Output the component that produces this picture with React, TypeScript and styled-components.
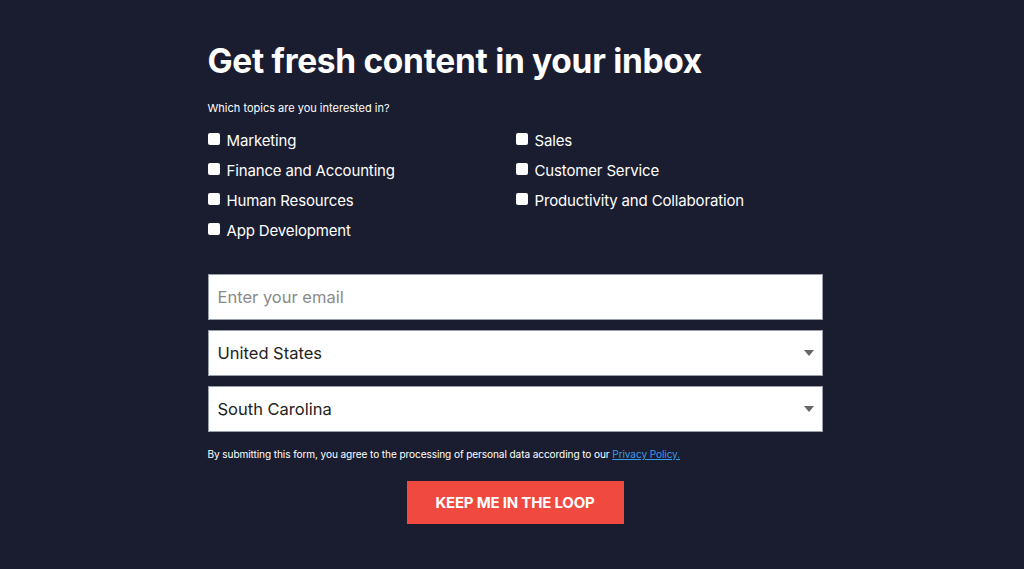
import React from "react";
import styled, {createGlobalStyle} from "styled-components";

const GlobalStyle = createGlobalStyle`
  html, body {
    margin: 0;
    padding: 0;
    background: #1a1d2f;
  }
  body {
    font-family: Inter, "Open Sans", "Liberation Sans", sans-serif;
  }
`;

const Page = styled.div`
  min-height: 569px;
  background: #1a1d2f;
  display: flex;
  justify-content: center;
`;

const Form = styled.form`
  width: 615px;
  margin-left: 6px;
  padding-top: 40px;
  display: flex;
  flex-direction: column;
`;

const Title = styled.h1`
  margin: 0;
  color: #fff;
  font-size: 33.5px;
  font-weight: 700;
  letter-spacing: -0.3px;
  line-height: 42px;
`;

const Question = styled.p`
  margin: 18px 0 9px;
  color: #fff;
  font-size: 11px;
  line-height: 16px;
`;

const Topics = styled.div`
  display: grid;
  grid-template-columns: 308px 1fr;
  grid-auto-flow: column;
  grid-template-rows: repeat(4, 30px);
`;

const Topic = styled.label`
  display: flex;
  align-items: center;
  gap: 7px;
  color: #fff;
  font-size: 15px;
  letter-spacing: -0.15px;
  cursor: pointer;
`;

const Box = styled.input`
  appearance: none;
  margin: 0;
  width: 12px;
  height: 12px;
  background: #fff;
  border-radius: 2px;
  flex: none;
  position: relative;
  top: -1px;
`;

const Fields = styled.div`
  margin-top: 29px;
  display: flex;
  flex-direction: column;
  gap: 10px;
`;

const Field = styled.div`
  height: 46px;
  background: #fff;
  border: 1px solid #9aa0ad;
  box-sizing: border-box;
  display: flex;
  align-items: center;
  justify-content: space-between;
  padding: 0 8px 0 9px;
`;

const FieldText = styled.span<{placeholder?: boolean}>`
  font-size: 16.5px;
  color: ${p => p.placeholder ? '#8a8a8a' : '#222'};
`;

const Caret = styled.span`
  width: 0;
  height: 0;
  border-left: 5px solid transparent;
  border-right: 5px solid transparent;
  border-top: 6px solid #666;
`;

const Notice = styled.p`
  margin: 15px 0 0;
  color: #fff;
  font-size: 10.1px;
  line-height: 14px;
  letter-spacing: -0.1px;
`;

const Link = styled.a`
  color: #3a9be8;
  text-decoration: underline;
`;

const Submit = styled.button`
  align-self: center;
  margin-top: 20px;
  width: 217px;
  height: 43px;
  border: none;
  background: #f04a40;
  color: #fff;
  font-family: inherit;
  font-size: 15px;
  font-weight: 700;
  letter-spacing: -0.2px;
  text-transform: uppercase;
`;

const topics = [
    'Marketing', 'Finance and Accounting', 'Human Resources', 'App Development',
    'Sales', 'Customer Service', 'Productivity and Collaboration',
];

export default function App() {
    return (
        <Page>
            <GlobalStyle/>
            <Form onSubmit={e => e.preventDefault()}>
                <Title>Get fresh content in your inbox</Title>
                <Question>Which topics are you interested in?</Question>
                <Topics>
                    {topics.map(t => (
                        <Topic key={t}><Box type="checkbox"/>{t}</Topic>
                    ))}
                </Topics>
                <Fields>
                    <Field><FieldText placeholder>Enter your email</FieldText></Field>
                    <Field><FieldText>United States</FieldText><Caret/></Field>
                    <Field><FieldText>South Carolina</FieldText><Caret/></Field>
                </Fields>
                <Notice>
                    By submitting this form, you agree to the processing of personal data according to our <Link href="#">Privacy Policy.</Link>
                </Notice>
                <Submit type="submit">Keep me in the loop</Submit>
            </Form>
        </Page>
    );
}
